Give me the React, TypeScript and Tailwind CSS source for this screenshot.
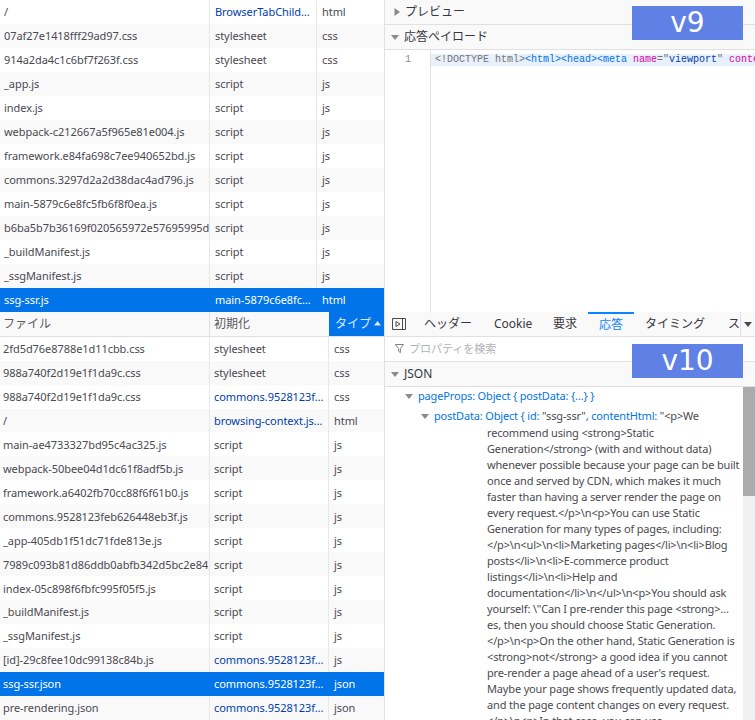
import React from "react";

const F = "font-['Noto_Sans','Noto_Sans_CJK_JP',sans-serif]";

type R = [string, string, string, boolean?];
const v9: R[] = [
  ["/", "BrowserTabChild…", "html", true],
  ["07af27e1418fff29ad97.css", "stylesheet", "css"],
  ["914a2da4c1c6bf7f263f.css", "stylesheet", "css"],
  ["_app.js", "script", "js"],
  ["index.js", "script", "js"],
  ["webpack-c212667a5f965e81e004.js", "script", "js"],
  ["framework.e84fa698c7ee940652bd.js", "script", "js"],
  ["commons.3297d2a2d38dac4ad796.js", "script", "js"],
  ["main-5879c6e8fc5fb6f8f0ea.js", "script", "js"],
  ["b6ba5b7b36169f020565972e57695995da4ae5a2.js", "script", "js"],
  ["_buildManifest.js", "script", "js"],
  ["_ssgManifest.js", "script", "js"],
];
const v10: R[] = [
  ["2fd5d76e8788e1d11cbb.css", "stylesheet", "css"],
  ["988a740f2d19e1f1da9c.css", "stylesheet", "css"],
  ["988a740f2d19e1f1da9c.css", "commons.9528123f…", "css", true],
  ["/", "browsing-context.js…", "html", true],
  ["main-ae4733327bd95c4ac325.js", "script", "js"],
  ["webpack-50bee04d1dc61f8adf5b.js", "script", "js"],
  ["framework.a6402fb70cc88f6f61b0.js", "script", "js"],
  ["commons.9528123feb626448eb3f.js", "script", "js"],
  ["_app-405db1f51dc71fde813e.js", "script", "js"],
  ["7989c093b81d86ddb0abfb342d5bc2e8476ab6f2.js", "script", "js"],
  ["index-05c898f6fbfc995f05f5.js", "script", "js"],
  ["_buildManifest.js", "script", "js"],
  ["_ssgManifest.js", "script", "js"],
  ["[id]-29c8fee10dc99138c84b.js", "commons.9528123f…", "js", true],
];

function Row({ r, i, w2, pl, pl2, selected }: { r: R; i: number; w2: string; pl: string; pl2: string; selected?: boolean }) {
  const bg = selected ? "bg-[#0074e8] text-white" : i % 2 ? "bg-[#f9f9fa] text-[#4a4a4f]" : "bg-white text-[#4a4a4f]";
  const bd = selected ? "border-transparent" : "border-[#e8e8ea]";
  return (
    <div className={`flex h-6 items-center text-[11px] tracking-[-0.06px] ${bg}`}>
      <div className={`w-[210px] shrink-0 h-full pt-px flex items-center overflow-hidden whitespace-nowrap border-r ${bd} ${pl}`}>
        <span className="block w-[205px] overflow-hidden">{r[0]}</span>
      </div>
      <div className={`${w2} shrink-0 h-full pt-px flex items-center overflow-hidden whitespace-nowrap border-r ${bd} ${pl2} ${r[3] && !selected ? "text-[#003eaa]" : ""}`}>{r[1]}</div>
      <div className={`flex-1 h-full pt-px flex items-center whitespace-nowrap pl-[5px]`}>{r[2]}</div>
    </div>
  );
}

const Tri = ({ open, cls = "" }: { open?: boolean; cls?: string }) => (
  <svg width="10" height="10" viewBox="0 0 10 10" className={`shrink-0 ${cls}`}>
    {open ? <path d="M1 3h8L5 8z" fill="#8a8a8f" /> : <path d="M2.5 1v8L8 5z" fill="#8a8a8f" />}
  </svg>
);

const lines = [
  'recommend using <strong>Static',
  'Generation</strong> (with and without data)',
  'whenever possible because your page can be built',
  'once and served by CDN, which makes it much',
  'faster than having a server render the page on',
  'every request.</p>\\n<p>You can use Static',
  'Generation for many types of pages, including:',
  '</p>\\n<ul>\\n<li>Marketing pages</li>\\n<li>Blog',
  'posts</li>\\n<li>E-commerce product',
  'listings</li>\\n<li>Help and',
  'documentation</li>\\n</ul>\\n<p>You should ask',
  'yourself: \\"Can I pre-render this page <strong>…',
  'es, then you should choose Static Generation.',
  '</p>\\n<p>On the other hand, Static Generation is',
  '<strong>not</strong> a good idea if you cannot',
  "pre-render a page ahead of a user's request.",
  'Maybe your page shows frequently updated data,',
  'and the page content changes on every request.',
  '</p>\\n<p>In that case, you can use',
];

export default function App() {
  return (
    <div className={`relative flex w-[755px] h-[720px] overflow-hidden bg-white ${F}`}>
      <div className="w-[385px] shrink-0 border-r border-[#e0e0e2] flex flex-col">
        {v9.map((r, i) => <Row key={i} r={r} i={i} w2="w-[107px]" pl="pl-[4px]" pl2="pl-[5px]" />)}
        <Row r={["ssg-ssr.js", "main-5879c6e8fc…", "html"]} i={0} w2="w-[107px]" pl="pl-[4px]" pl2="pl-[5px]" selected />
        <div className="flex h-[25px] shrink-0 items-center text-[12px] whitespace-nowrap text-[#5a5a5f] bg-[#f9f9fa] border-b border-[#e0e0e2]">
          <div className="w-[210px] h-full flex items-center pl-[3px] border-r border-[#e0e0e2]">ファイル</div>
          <div className="w-[119px] h-full flex items-center pl-[4px]">初期化</div>
          <div className="flex-1 h-full flex items-center gap-[3px] pl-[6px] bg-[#0074e8] text-[#dbeafe]">
            タイプ
            <svg width="7" height="5" viewBox="0 0 7 5"><path d="M0 4.5h7L3.5 0z" fill="#dbeafe" /></svg>
          </div>
        </div>
        {v10.map((r, i) => <Row key={i} r={r} i={i} w2="w-[119px]" pl="pl-[3px]" pl2="pl-[4px]" />)}
        <Row r={["ssg-ssr.json", "commons.9528123f…", "json"]} i={0} w2="w-[119px]" pl="pl-[3px]" pl2="pl-[4px]" selected />
        <Row r={["pre-rendering.json", "commons.9528123f…", "json", true]} i={1} w2="w-[119px]" pl="pl-[3px]" pl2="pl-[4px]" />
      </div>

      <div className="flex-1 min-w-0 flex flex-col">
        <div className="h-[25px] shrink-0 flex items-center gap-[3px] pl-[7px] bg-[#f9f9fa] border-b border-[#e0e0e2] text-[12px] text-[#38383d]">
          <Tri />プレビュー
        </div>
        <div className="h-[25px] shrink-0 flex items-center gap-[4px] pl-[5px] bg-[#f9f9fa] border-b border-[#e0e0e2] text-[12px] text-[#38383d]">
          <Tri open />応答ペイロード
        </div>
        <div className="h-[262px] shrink-0 flex">
          <div className="w-[46px] shrink-0 border-r border-[#e0e0e2] pt-[4px] pr-[19px] text-right text-[10px] leading-[12px] text-[#8a8a8f] font-['Liberation_Mono',monospace]">1</div>
          <div className="flex-1 min-w-0 pt-[4px]">
            <div className="h-3 bg-[#e8f0fb] pl-[4px] text-[10px] leading-[12px] whitespace-nowrap overflow-hidden font-['Liberation_Mono',monospace] text-[#737373]">
              {"<!DOCTYPE html>"}<span className="text-[#0074e8]">{"<html><head><meta "}</span><span className="text-[#dd00a9]">name</span>="<span className="text-[#003eaa]">viewport</span>" <span className="text-[#dd00a9]">content</span>
            </div>
          </div>
        </div>
        <div className="h-[25px] shrink-0 flex items-center bg-[#f9f9fa] border-b border-[#e0e0e2] text-[12px] text-[#38383d] relative">
          <svg width="14" height="12" viewBox="0 0 14 12" className="ml-[7px] shrink-0">
            <path d="M.5.5h13v11H.5zM10.5.5v11" fill="none" stroke="#4a4a4f" />
            <path d="M4 3.5v5L8 6z" fill="none" stroke="#4a4a4f" />
          </svg>
          <div className="flex items-center h-full whitespace-nowrap">
            <span className="ml-[18px]">ヘッダー</span>
            <span className="ml-[22px] w-[37px]">Cookie</span>
            <span className="ml-[22px]">要求</span>
            <span className="ml-[11px] px-[11px] h-full flex items-center text-[#0a84ff] border-t-2 border-[#0a84ff]">応答</span>
            <span className="ml-[11px]">タイミング</span>
            <span className="ml-[23px] w-[12px] overflow-hidden">スタック</span>
          </div>
          <div className="ml-auto w-[15px] h-full flex items-center justify-center border-l border-[#e0e0e2]">
            <svg width="8" height="5" viewBox="0 0 8 5"><path d="M0 0h8L4 5z" fill="#4a4a4f" /></svg>
          </div>
        </div>
        <div className="h-[25px] shrink-0 flex items-center gap-[5px] pl-[10px] border-b border-[#e0e0e2] text-[11px] text-[#b1b1b3]">
          <svg width="9" height="10" viewBox="0 0 10 11"><path d="M.5.5h9L6 5v4.5L4 8V5z" fill="none" stroke="#737373" /></svg>
          プロパティを検索
        </div>
        <div className="h-[25px] shrink-0 flex items-center gap-[4px] pl-[5px] bg-[#f9f9fa] border-b border-[#e0e0e2] text-[12px] text-[#38383d]">
          <Tri open />JSON
        </div>
        <div className="flex-1 min-h-0 flex overflow-hidden">
          <div className="flex-1 min-w-0 text-[11px] tracking-[-0.16px] leading-4 text-[#4a4a4f] whitespace-nowrap pt-[1px]">
            <div className="flex items-center h-4 pl-[19px] gap-[4px] text-[#0074e8]">
              <Tri open /><span>pageProps: Object {"{ postData: {…} }"}</span>
            </div>
            <div className="flex items-center h-4 mt-[4px] pl-[35px] gap-[4px]">
              <Tri open />
              <span className="whitespace-pre">
                <span className="text-[#0074e8]">{"postData: Object { id: "}</span>"ssg-ssr"<span className="text-[#0074e8]">{", contentHtml: "}</span>{'"<p>We'}
              </span>
            </div>
            <div className="pl-[102px] mt-[1px]">
              {lines.map((l, i) => <div key={i} className="h-4">{l}</div>)}
            </div>
          </div>
          <div className="w-3 shrink-0 bg-[#f1f1f1]">
            <div className="h-[109px] bg-[#ababab]" />
          </div>
        </div>
      </div>

      <div className="absolute left-[632px] top-[6px] w-[111px] h-[34px] bg-[#5f81e6] text-white text-[28px] flex items-center justify-center font-['DejaVu_Sans',sans-serif]">v9</div>
      <div className="absolute left-[632px] top-[344px] w-[111px] h-[34px] bg-[#5f81e6] text-white text-[28px] flex items-center justify-center font-['DejaVu_Sans',sans-serif]">v10</div>
    </div>
  );
}
